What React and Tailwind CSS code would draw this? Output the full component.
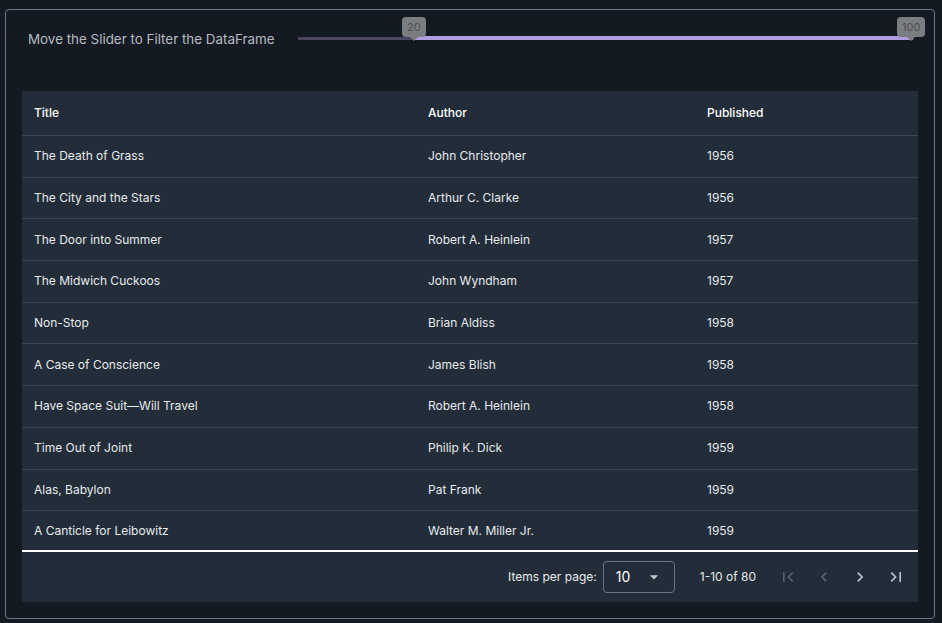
const books = [
  ['The Death of Grass', 'John Christopher', '1956'],
  ['The City and the Stars', 'Arthur C. Clarke', '1956'],
  ['The Door into Summer', 'Robert A. Heinlein', '1957'],
  ['The Midwich Cuckoos', 'John Wyndham', '1957'],
  ['Non-Stop', 'Brian Aldiss', '1958'],
  ['A Case of Conscience', 'James Blish', '1958'],
  ['Have Space Suit\u2014Will Travel', 'Robert A. Heinlein', '1958'],
  ['Time Out of Joint', 'Philip K. Dick', '1959'],
  ['Alas, Babylon', 'Pat Frank', '1959'],
  ['A Canticle for Leibowitz', 'Walter M. Miller Jr.', '1959'],
];

function Icon({ d, className }) {
  return (
    <svg viewBox="0 0 24 24" className={className} fill="currentColor">
      <path d={d} />
    </svg>
  );
}

function Bubble({ value }) {
  return (
    <div className="relative flex h-[20px] items-center justify-center rounded-[4px] bg-[#7b7d80] px-[5px] text-[11px] text-[#4f5257]">
      {value}
      <div className="absolute bottom-[-4px] left-1/2 h-0 w-0 -translate-x-1/2 border-x-[4px] border-t-[4px] border-x-transparent border-t-[#7b7d80]" />
    </div>
  );
}

export default function App() {
  return (
    <div className="h-[623px] w-[942px] bg-[#131a22] pl-[5px] pt-[9px] font-['Inter',sans-serif]">
      <div className="flex h-[610px] w-[930px] flex-col rounded-[4px] border border-[#6a7888] px-4 pb-4">
        <div className="relative h-[81px] shrink-0">
          <div className="absolute left-[6px] top-[19px] text-[13.4px] text-[#b7bbc1]">
            Move the Slider to Filter the DataFrame
          </div>
          <div className="absolute left-[276px] top-[26px] flex h-[4px] w-[615px] items-center">
            <div className="h-[3px] w-[117px] bg-[#4a4660]" />
            <div className="h-[4px] flex-1 bg-[#b09ce0]" />
          </div>
          <div className="absolute left-[380px] top-[7px]"><Bubble value="20" /></div>
          <div className="absolute left-[875px] top-[7px]"><Bubble value="100" /></div>
        </div>
        <div className="flex flex-1 flex-col bg-[#222d39] text-[12px] text-[#e8eaec]">
          <div className="grid h-[44px] shrink-0 grid-cols-[394px_279px_1fr] items-center font-medium text-white">
            <div className="px-3">Title</div>
            <div className="px-3">Author</div>
            <div className="px-3">Published</div>
          </div>
          {books.map(([title, author, year], i) => (
            <div
              key={title}
              className={`grid h-[41.7px] shrink-0 grid-cols-[394px_279px_1fr] items-center border-t border-[#3a4552] ${i === books.length - 1 ? 'border-b-2 border-b-white' : ''}`}
            >
              <div className="px-3">{title}</div>
              <div className="px-3">{author}</div>
              <div className="px-3">{year}</div>
            </div>
          ))}
          <div className="flex flex-1 items-center justify-end pr-[12px] text-[12px]">
            <span className="mr-[6px]">Items per page:</span>
            <div className="flex h-[32px] w-[72px] items-center justify-between rounded-[4px] border border-[#6b7580] pl-[12px] pr-[10px] text-[14px] text-white">
              10
              <Icon d="M7 10l5 5 5-5z" className="h-[20px] w-[20px] text-[#c0c6cc]" />
            </div>
            <span className="ml-[25px] mr-[22px]">1-10 of 80</span>
            <div className="flex items-center gap-[16px]">
              <Icon d="M18.41 16.59L13.82 12l4.59-4.59L17 6l-6 6 6 6zM6 6h2v12H6z" className="h-[20px] w-[20px] text-[#56616d]" />
              <Icon d="M15.41 7.41L14 6l-6 6 6 6 1.41-1.41L10.83 12z" className="h-[20px] w-[20px] text-[#56616d]" />
              <Icon d="M10 6L8.59 7.41 13.17 12l-4.58 4.59L10 18l6-6z" className="h-[20px] w-[20px] text-[#b8c0c8]" />
              <Icon d="M5.59 7.41L10.18 12l-4.59 4.59L7 18l6-6-6-6zM16 6h2v12h-2z" className="h-[20px] w-[20px] text-[#b8c0c8]" />
            </div>
          </div>
        </div>
      </div>
    </div>
  );
}
